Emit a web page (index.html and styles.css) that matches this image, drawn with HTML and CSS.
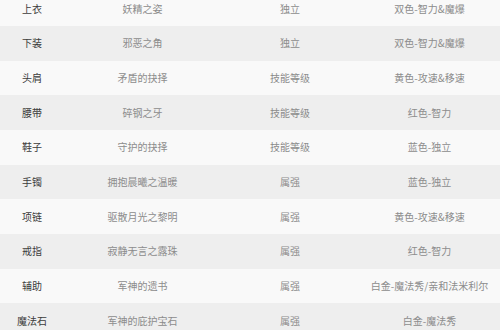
FILE: index.html
```html
<!DOCTYPE html>
<html lang="zh-CN">
<head>
<meta charset="utf-8">
<link rel="stylesheet" href="styles.css">
</head>
<body>
<div class="table">
  <div class="row"><span class="slot">上衣</span><span>妖精之姿</span><span>独立</span><span>双色-智力&amp;魔爆</span></div>
  <div class="row alt"><span class="slot">下装</span><span>邪恶之角</span><span>独立</span><span>双色-智力&amp;魔爆</span></div>
  <div class="row"><span class="slot">头肩</span><span>矛盾的抉择</span><span>技能等级</span><span>黄色-攻速&amp;移速</span></div>
  <div class="row alt"><span class="slot">腰带</span><span>碎钢之牙</span><span>技能等级</span><span>红色-智力</span></div>
  <div class="row"><span class="slot">鞋子</span><span>守护的抉择</span><span>技能等级</span><span>蓝色-独立</span></div>
  <div class="row alt"><span class="slot">手镯</span><span>拥抱晨曦之温暖</span><span>属强</span><span>蓝色-独立</span></div>
  <div class="row"><span class="slot">项链</span><span>驱散月光之黎明</span><span>属强</span><span>黄色-攻速&amp;移速</span></div>
  <div class="row alt"><span class="slot">戒指</span><span>寂静无言之露珠</span><span>属强</span><span>红色-智力</span></div>
  <div class="row"><span class="slot">辅助</span><span>军神的遗书</span><span>属强</span><span>白金-魔法秀/亲和法米利尔</span></div>
  <div class="row alt"><span class="slot">魔法石</span><span>军神的庇护宝石</span><span>属强</span><span>白金-魔法秀</span></div>
</div>
</body>
</html>
```

FILE: styles.css
```css
html, body {
  margin: 0;
  padding: 0;
  background: #f9f9f9;
}
body {
  font-family: "Noto Sans CJK SC", "Noto Sans", sans-serif;
  font-size: 10px;
  color: #8c8c8c;
  overflow: hidden;
}
.table {
  margin-top: -8.67px;
  display: flex;
  flex-direction: column;
}
.row {
  height: 34.67px;
  display: grid;
  grid-template-columns: 64px 157px 138px 141px;
  align-items: center;
  background: #f9f9f9;
}
.row.alt {
  background: #eeeeee;
}
.row span {
  text-align: center;
  white-space: nowrap;
  line-height: 14px;
}
.row .slot {
  color: #3c3c3c;
}
```
